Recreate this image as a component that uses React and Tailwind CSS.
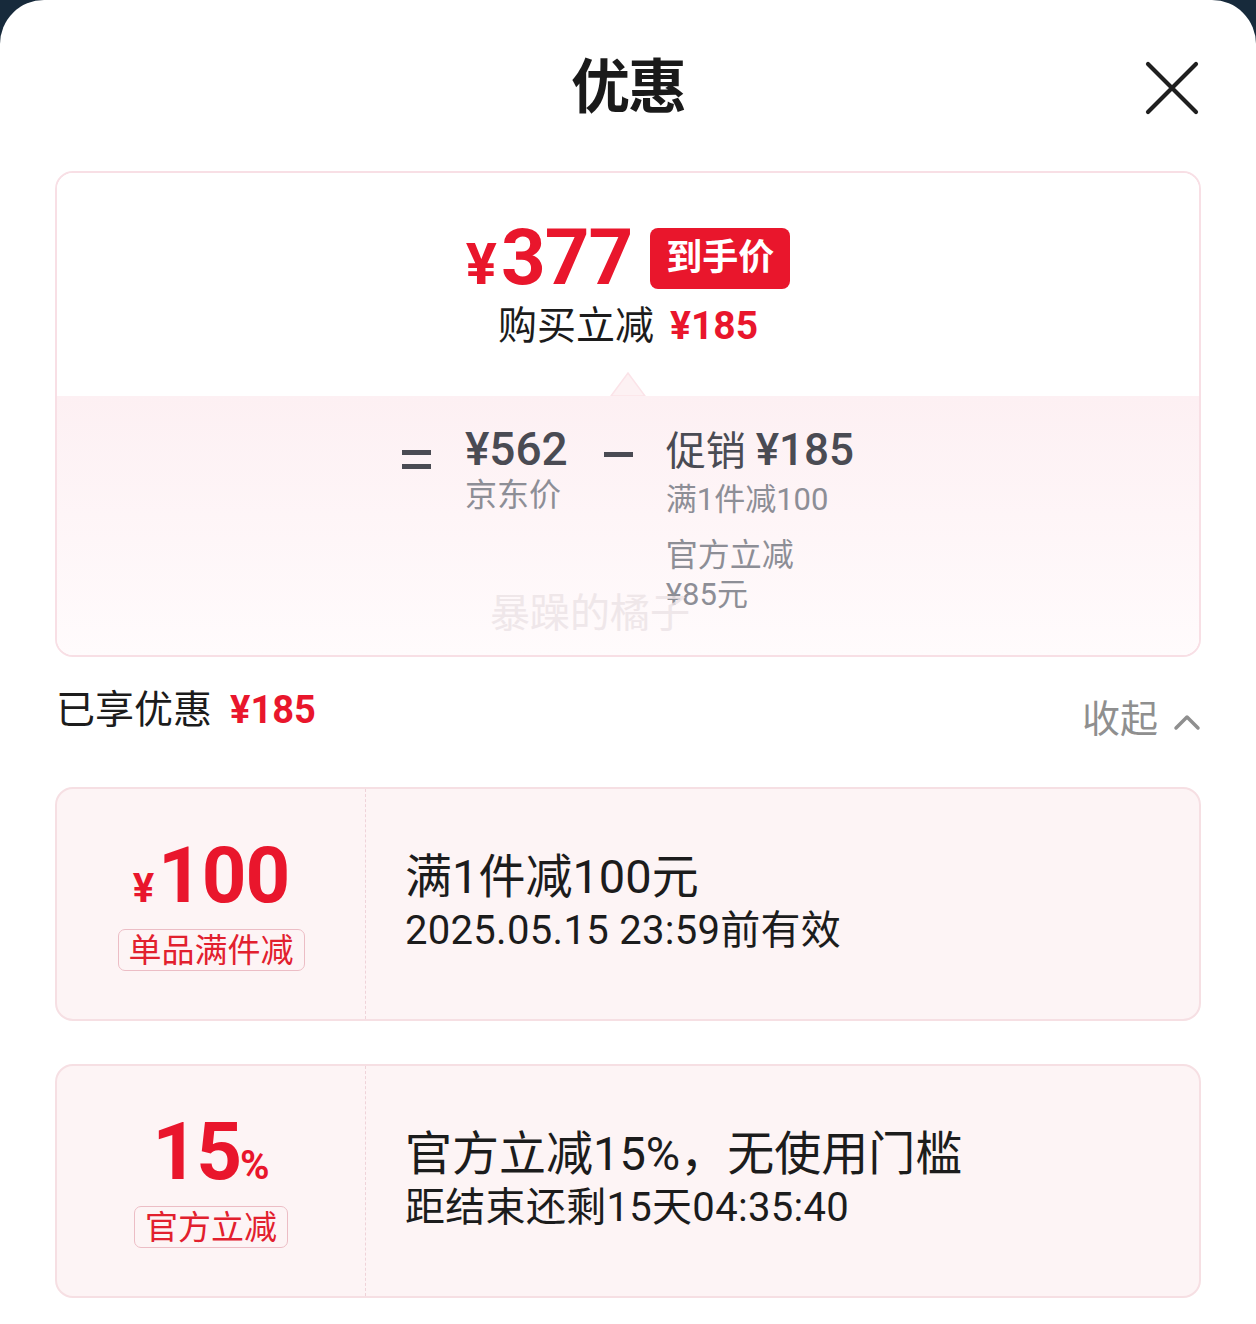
import React from "react";

const FONT = { fontFamily: 'Roboto, "Noto Sans CJK SC", "Noto Sans", sans-serif' };

function Coupon({ left, tag, title, sub }) {
  return (
    <div className="grid grid-cols-[309px_1fr] h-[234px] rounded-[18px] border-2 border-[#f6dfe3] bg-[#fdf4f5] overflow-hidden">
      <div className="flex flex-col items-center justify-center pt-[8px] border-r border-dashed border-[#efd3d9]">
        <div className="h-[70px] flex items-end">{left}</div>
        <div className="mt-[14px] h-[42px] px-[10px] flex items-center rounded-[7px] border-[1.5px] border-[#ecbdc5] text-[#e2202e] text-[33px] leading-none">
          {tag}
        </div>
      </div>
      <div className="flex flex-col justify-center pl-[39px] text-[#1c1c1c]">
        <div className="text-[47px] leading-[54px]">{title}</div>
        <div className="text-[40px] leading-[54px] tracking-[0.3px]">{sub}</div>
      </div>
    </div>
  );
}

export default function App() {
  return (
    <div style={FONT} className="w-[1256px] h-[1324px] bg-[#172a3b] overflow-hidden">
      <div className="h-[1324px] bg-white rounded-t-[44px] px-[55px]">
        {/* header */}
        <div className="grid grid-cols-[1fr_auto_1fr] items-center h-[171px] pt-[4px]">
          <div />
          <div className="text-[59px] font-bold text-[#1a1a1a] leading-none tracking-[-2px]">优惠</div>
          <div className="flex justify-end pr-[2px]">
            <svg width="54" height="54" viewBox="0 0 54 54">
              <path d="M3 3 L51 51 M51 3 L3 51" stroke="#1f1f1f" strokeWidth="4.2" strokeLinecap="round" />
            </svg>
          </div>
        </div>

        {/* price card */}
        <div className="rounded-[18px] border-2 border-[#f8dfe5] overflow-hidden">
          <div className="relative h-[223px] bg-white flex flex-col items-center pt-[50px]">
            <div className="flex items-center h-[70px]">
              <div className="flex items-baseline text-[#e9162c] font-bold leading-none">
                <span className="text-[58px] mr-[4px]">¥</span>
                <span className="text-[78px] tracking-[-1px]">377</span>
              </div>
              <div className="ml-[18px] h-[61px] px-[16px] flex items-center rounded-[8px] bg-[#e9162c] text-white text-[36px] font-bold leading-none">
                到手价
              </div>
            </div>
            <div className="mt-[11px] flex items-center h-[44px] text-[39px] leading-none">
              <span className="text-[#1c1c1c]">购买立减</span>
              <span className="ml-[16px] text-[#e9162c] font-bold">¥185</span>
            </div>
            <svg className="absolute bottom-0 left-1/2 -translate-x-1/2" width="36" height="24" viewBox="0 0 36 24">
              <polygon points="1,24 18,1 35,24" fill="#fdf1f3" stroke="#fbe3e8" strokeWidth="1.5" />
            </svg>
          </div>
          <div className="relative h-[259px] bg-linear-to-b from-[#fdf0f3] to-[#fffbfc] flex justify-center pt-[26px] text-[#4a4b53]">
            <div className="flex items-start">
              <div className="mt-[28px] w-[29px] h-[19px] flex flex-col justify-between">
                <div className="h-[5px] bg-[#4a4b53]" />
                <div className="h-[5px] bg-[#4a4b53]" />
              </div>
              <div className="ml-[34px] flex flex-col">
                <div className="text-[46px] font-medium leading-[54px]">¥562</div>
                <div className="text-[32px] leading-[38px] text-[#8d8e96]">京东价</div>
              </div>
              <div className="ml-[36px] mt-[30px] w-[29px] h-[5px] bg-[#4a4b53]" />
              <div className="ml-[33px] flex flex-col">
                <div className="text-[40px] leading-[56px]">
                  促销 <span className="font-medium text-[44px]">¥185</span>
                </div>
                <div className="text-[31px] leading-[40px] text-[#8d8e96]">满1件减100</div>
                <div className="mt-[15px] text-[32px] leading-[40px] text-[#8d8e96]">官方立减</div>
                <div className="text-[31px] leading-[40px] text-[#8d8e96]">¥85元</div>
              </div>
            </div>
            <div className="absolute left-[433px] top-[198px] text-[40px] leading-none text-[#ece3e6] opacity-80">
              暴躁的橘子
            </div>
          </div>
        </div>

        {/* summary row */}
        <div className="h-[130px] flex justify-between items-start pt-[31px]">
          <div className="flex items-center text-[39px] leading-[44px] pl-[1px]">
            <span className="text-[#1c1c1c]">已享优惠</span>
            <span className="ml-[18px] text-[#e9162c] font-bold text-[38px]">¥185</span>
          </div>
          <div className="mt-[9px] flex items-center text-[38px] leading-[44px] text-[#8f8f8f]">
            <span>收起</span>
            <svg className="ml-[15px] mt-[6px]" width="28" height="18" viewBox="0 0 28 18">
              <path d="M3 15 L14 4 L25 15" fill="none" stroke="#8f8f8f" strokeWidth="3.5" strokeLinecap="round" strokeLinejoin="round" />
            </svg>
          </div>
        </div>

        <Coupon
          left={
            <div className="flex items-baseline text-[#e9162c] font-bold leading-none">
              <span className="text-[40px] mr-[4px]">¥</span>
              <span className="text-[78px] tracking-[-1px]">100</span>
            </div>
          }
          tag="单品满件减"
          title="满1件减100元"
          sub="2025.05.15 23:59前有效"
        />
        <div className="h-[43px]" />
        <Coupon
          left={
            <div className="flex items-baseline text-[#e9162c] font-bold leading-none">
              <span className="text-[80px] tracking-[-2px]">15</span>
              <span className="text-[40px]">%</span>
            </div>
          }
          tag="官方立减"
          title="官方立减15%，无使用门槛"
          sub="距结束还剩15天04:35:40"
        />
      </div>
    </div>
  );
}
